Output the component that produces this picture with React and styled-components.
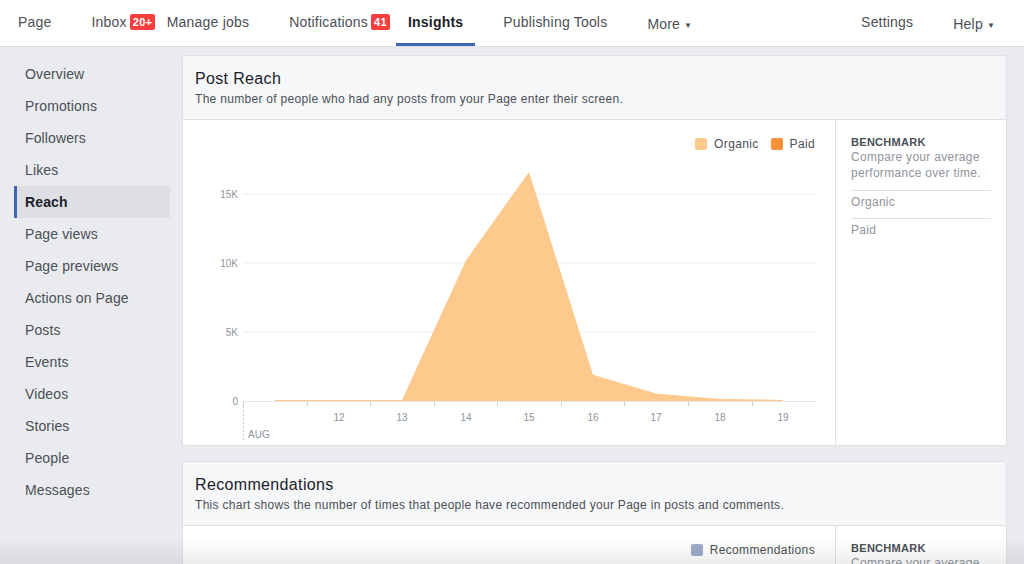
import React from 'react'
import styled, { createGlobalStyle } from 'styled-components'

const GlobalStyle = createGlobalStyle`
  body {
    margin: 0;
    background: #e9ebee;
    font-family: "Liberation Sans", Helvetica, Arial, sans-serif;
    color: #1d2129;
    overflow: hidden;
  }
`

const Page = styled.div`
  width: 1024px;
  height: 564px;
  overflow: hidden;
  position: relative;
`

const TopNav = styled.nav`
  height: 46px;
  background: #fff;
  border-bottom: 1px solid #dddfe2;
  display: flex;
  align-items: stretch;
  gap: 16px;
  padding: 0 17px 0 6px;
`

const Tab = styled.div`
  position: relative;
  display: flex;
  align-items: center;
  padding: 0 12px 2px;
  font-size: 14px;
  letter-spacing: 0.2px;
  color: ${props => (props.active ? '#1d2129' : '#4b4f56')};
  font-weight: ${props => (props.active ? 'bold' : 'normal')};
  box-shadow: ${props => (props.active ? 'inset 0 -3px 0 #4267b2' : 'none')};
  margin-left: ${props => (props.push ? 'auto' : '0')};
  white-space: nowrap;
`

const TabLabel = styled.span`
  position: relative;
  top: ${props => (props.low ? '2px' : '0')};
`

const Badge = styled.span`
  position: absolute;
  left: calc(100% + 3px);
  top: 50%;
  margin-top: -8px;
  height: 16px;
  line-height: 16px;
  padding: 0 3px;
  border-radius: 2px;
  background: #fa3e3e;
  color: #fff;
  font-size: 11px;
  font-weight: bold;
  letter-spacing: 0.3px;
`

const Caret = styled.span`
  font-size: 8px;
  margin-left: 4px;
  vertical-align: 1px;
`

const Body = styled.div`
  display: flex;
  align-items: flex-start;
`

const Sidebar = styled.ul`
  list-style: none;
  margin: 0;
  padding: 11px 12px 0 14px;
  width: 156px;
  flex-shrink: 0;
`

const SideItem = styled.li`
  height: 32px;
  display: flex;
  align-items: center;
  padding-left: ${props => (props.active ? '8px' : '11px')};
  border-left: ${props => (props.active ? '3px solid #4267b2' : 'none')};
  background: ${props => (props.active ? '#dddfe2' : 'transparent')};
  font-size: 14px;
  letter-spacing: 0.12px;
  font-weight: ${props => (props.active ? 'bold' : 'normal')};
  color: ${props => (props.active ? '#1d2129' : '#4b4f56')};
`

const Main = styled.main`
  flex: 1;
  padding: 8px 18px 0 0;
  display: flex;
  flex-direction: column;
  gap: 15px;
`

const Card = styled.section`
  background: #fff;
  border: 1px solid #dddfe2;
  border-radius: 3px;
  overflow: hidden;
`

const CardHeader = styled.header`
  background: #f6f7f9;
  border-bottom: 1px solid #dddfe2;
  padding: 13px 12px 12px;
`

const Title = styled.h2`
  margin: 0;
  font-size: 16px;
  line-height: 20px;
  font-weight: normal;
  letter-spacing: 0.35px;
  color: #1d2129;
`

const Subtitle = styled.p`
  margin: 2px 0 0;
  font-size: 12px;
  line-height: 16px;
  letter-spacing: 0.3px;
  color: #4b4f56;
`

const CardBody = styled.div`
  display: flex;
  height: 325px;
`

const ChartPanel = styled.div`
  flex: 1;
  border-right: 1px solid #dddfe2;
  display: flex;
  flex-direction: column;
`

const Legend = styled.div`
  display: flex;
  justify-content: flex-end;
  gap: 12px;
  padding: 16px 20px 0 0;
  height: 24px;
  font-size: 12px;
  letter-spacing: 0.35px;
  color: #4b4f56;
`

const LegendItem = styled.div`
  display: flex;
  align-items: center;
  gap: 7px;
  height: 16px;
`

const Swatch = styled.span`
  width: 12px;
  height: 12px;
  border-radius: 2px;
  background: ${props => props.color};
`

const Benchmark = styled.aside`
  width: 140px;
  padding: 15px 15px 0;
  flex-shrink: 0;
`

const BenchTitle = styled.div`
  font-size: 11px;
  font-weight: bold;
  line-height: 14px;
  letter-spacing: 0.3px;
  color: #4b4f56;
`

const BenchText = styled.div`
  font-size: 12px;
  line-height: 16px;
  letter-spacing: 0.3px;
  color: #90949c;
  padding-bottom: 9px;
`

const BenchRow = styled.div`
  border-top: 1px solid #dddfe2;
  font-size: 12px;
  line-height: 16px;
  letter-spacing: 0.3px;
  color: #90949c;
  padding: 3px 0 8px;
`

const BottomFade = styled.div`
  position: absolute;
  left: 0;
  right: 0;
  bottom: 0;
  height: 26px;
  pointer-events: none;
  background: linear-gradient(to bottom, rgba(0, 0, 0, 0), rgba(0, 0, 0, 0.07));
`

const navTabs = [
  { label: 'Page' },
  { label: 'Inbox', badge: '20+' },
  { label: 'Manage jobs' },
  { label: 'Notifications', badge: '41' },
  { label: 'Insights', active: true },
  { label: 'Publishing Tools' },
  { label: 'More', caret: true }
]

const sideItems = [
  'Overview', 'Promotions', 'Followers', 'Likes', 'Reach', 'Page views',
  'Page previews', 'Actions on Page', 'Posts', 'Events', 'Videos',
  'Stories', 'People', 'Messages'
]

// chart coords: x from page x - 183, y from page y - 160
const dataX = [92, 156, 219, 283, 346, 410, 473, 537, 600]
const reach = [0, 0, 0, 10.2, 16.6, 1.9, 0.55, 0.15, 0.08]
const yOf = v => 241 - v * 13.8
const ticks = [60, 124, 187, 251, 314, 378, 441, 505, 569]
const dayLabels = [
  [156, '12'], [219, '13'], [283, '14'], [346, '15'], [410, '16'],
  [473, '17'], [537, '18'], [600, '19']
]

function ReachChart () {
  const pts = dataX.map((x, i) => `${x},${Math.min(yOf(reach[i]), 240)}`).join(' ')
  const area = `${dataX[0]},241 ${pts} ${dataX[dataX.length - 1]},241`
  return (
    <svg width='652' height='285' style={{ display: 'block' }}>
      {[[34, '15K'], [103, '10K'], [172, '5K']].map(([y, t]) => (
        <g key={t}>
          <line x1='60' x2='633' y1={y} y2={y} stroke='#ebedf0' />
          <text x='55' y={y + 4} fontSize='10' fill='#90949c' textAnchor='end'>{t}</text>
        </g>
      ))}
      <text x='55' y='245' fontSize='10' fill='#90949c' textAnchor='end'>0</text>
      <polygon points={area} fill='#fdc98d' />
      <line x1='60' x2='633' y1='241.5' y2='241.5' stroke='#e4e6eb' />
      {ticks.map(x => (
        <line key={x} x1={x + 0.5} x2={x + 0.5} y1='242' y2='246' stroke='#c9ccd1' />
      ))}
      <line x1='60.5' x2='60.5' y1='246' y2='280' stroke='#c9ccd1' strokeDasharray='2 2' />
      {dayLabels.map(([x, t]) => (
        <text key={t} x={x} y='261' fontSize='10' fill='#90949c' textAnchor='middle'>{t}</text>
      ))}
      <text x='65' y='278' fontSize='10' fill='#90949c'>AUG</text>
    </svg>
  )
}

function BenchmarkPanel ({ rows }) {
  return (
    <Benchmark>
      <BenchTitle>BENCHMARK</BenchTitle>
      <BenchText>Compare your average performance over time.</BenchText>
      {rows.map(r => <BenchRow key={r}>{r}</BenchRow>)}
    </Benchmark>
  )
}

export default function App () {
  return (
    <Page>
      <GlobalStyle />
      <TopNav>
        {navTabs.map(t => (
          <Tab key={t.label} active={t.active}>
            <TabLabel low={t.caret}>
              {t.label}
              {t.caret && <Caret>▼</Caret>}
              {t.badge && <Badge>{t.badge}</Badge>}
            </TabLabel>
          </Tab>
        ))}
        <Tab push>
          <TabLabel>Settings</TabLabel>
        </Tab>
        <Tab>
          <TabLabel low>Help<Caret>▼</Caret></TabLabel>
        </Tab>
      </TopNav>
      <Body>
        <Sidebar>
          {sideItems.map(s => (
            <SideItem key={s} active={s === 'Reach'}>{s}</SideItem>
          ))}
        </Sidebar>
        <Main>
          <Card>
            <CardHeader>
              <Title>Post Reach</Title>
              <Subtitle>The number of people who had any posts from your Page enter their screen.</Subtitle>
            </CardHeader>
            <CardBody>
              <ChartPanel>
                <Legend>
                  <LegendItem><Swatch color='#fdc98d' />Organic</LegendItem>
                  <LegendItem><Swatch color='#f7923b' />Paid</LegendItem>
                </Legend>
                <ReachChart />
              </ChartPanel>
              <BenchmarkPanel rows={['Organic', 'Paid']} />
            </CardBody>
          </Card>
          <Card>
            <CardHeader>
              <Title>Recommendations</Title>
              <Subtitle>This chart shows the number of times that people have recommended your Page in posts and comments.</Subtitle>
            </CardHeader>
            <CardBody>
              <ChartPanel>
                <Legend>
                  <LegendItem><Swatch color='#9eaccb' />Recommendations</LegendItem>
                </Legend>
              </ChartPanel>
              <BenchmarkPanel rows={['Recommendations']} />
            </CardBody>
          </Card>
        </Main>
      </Body>
      <BottomFade />
    </Page>
  )
}
